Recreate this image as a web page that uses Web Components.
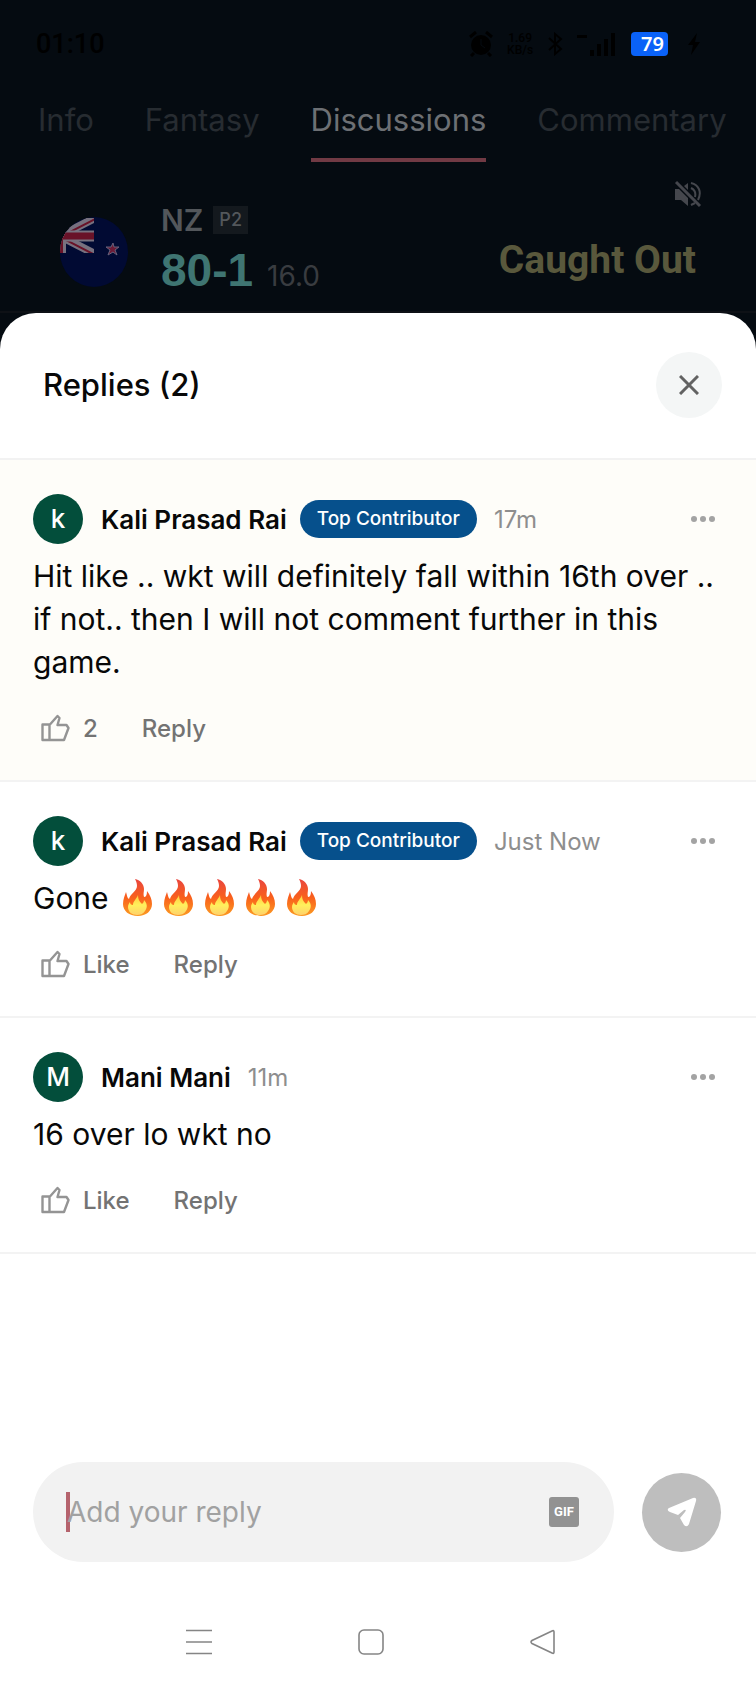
<!DOCTYPE html>
<html lang="en">
<head>
<meta charset="utf-8">
<meta name="viewport" content="width=device-width, initial-scale=1">
<title>Replies</title>
<style>
    html {
        background: #050b11;
    }
    body {
        margin: 0;
        font-family: Inter, "Liberation Sans", sans-serif;
        color: #080808;
    }
</style>
</head>
<body>
<discussion-app>
    <status-bar slot="top"></status-bar>
    <match-tabs slot="top"></match-tabs>
    <match-score slot="top" team="NZ" phase="P2" score="80-1" overs="16.0">Caught Out</match-score>
    <replies-header count="2">Replies</replies-header>
    <reply-comment author="Kali Prasad Rai" initial="k" time="17m" likes="2" top highlighted>Hit like .. wkt will definitely fall within 16th over .. if not.. then I will not comment further in this game.</reply-comment>
    <reply-comment author="Kali Prasad Rai" initial="k" time="Just Now" top>Gone <fire-emoji></fire-emoji><fire-emoji></fire-emoji><fire-emoji></fire-emoji><fire-emoji></fire-emoji><fire-emoji></fire-emoji></reply-comment>
    <reply-comment author="Mani Mani" initial="M" time="11m">16 over lo wkt no</reply-comment>
    <reply-composer slot="bottom"></reply-composer>
    <system-nav slot="bottom"></system-nav>
</discussion-app>

<script>
class DiscussionApp extends HTMLElement {
    constructor() {
        super();
        this.attachShadow({ mode: "open" });
        this.shadowRoot.innerHTML = `
        <style>
            :host {
                display: flex;
                flex-direction: column;
                min-height: 100vh;
                background: #050b11;
            }
            main {
                flex: 1;
                display: flex;
                flex-direction: column;
                background: #fff;
                border-radius: 36px 36px 0 0;
            }
            .list {
                flex: 1;
            }
        </style>
        <header><slot name="top"></slot></header>
        <main>
            <div class="list"><slot></slot></div>
            <slot name="bottom"></slot>
        </main>`;
    }
}

class StatusBar extends HTMLElement {
    constructor() {
        super();
        this.attachShadow({ mode: "open" });
        this.shadowRoot.innerHTML = `
        <style>
            :host {
                display: flex;
                align-items: center;
                justify-content: space-between;
                height: 88px;
                padding: 0 50px 0 36px;
                box-sizing: border-box;
                color: #000;
                font: 500 27px Roboto, sans-serif;
            }
            .icons {
                display: flex;
                align-items: center;
                gap: 14px;
            }
            .speed {
                font-size: 12px;
                line-height: 12px;
                text-align: center;
            }
            .battery {
                padding: 0 4px 0 10px;
                border-radius: 4px;
                background: #0a62f8;
                color: #fff;
                font: 600 20px/24px "Noto Sans", sans-serif;
            }
            svg {
                display: block;
            }
        </style>
        <span>01:10</span>
        <div class="icons">
            <svg width="24" height="26" viewBox="0 0 24 26">
                <circle cx="12" cy="14" r="10"/>
                <path d="M1 6l6-5M23 6l-6-5M5 22l-3 3M19 22l3 3" stroke="#000" stroke-width="3"/>
                <path d="M12 8v6l4 3" fill="none" stroke="#050b11" stroke-width="1"/>
            </svg>
            <span class="speed">1.69<br>KB/s</span>
            <svg width="16" height="24" viewBox="0 0 16 24" fill="none" stroke="#000" stroke-width="2">
                <path d="M2 6l12 11-6 5V2l6 5L2 18"/>
            </svg>
            <svg width="40" height="24" viewBox="0 0 40 24">
                <path d="M0 3h10v3H0zM13 18h4v6h-4zM20 12h4v12h-4zM27 7h4v17h-4zM34 1h4v23h-4z"/>
            </svg>
            <span class="battery">79</span>
            <svg width="24" height="24" viewBox="0 0 24 24">
                <path d="M15 1L6 13h5l-2 10 9-13h-5z"/>
            </svg>
        </div>`;
    }
}

class MatchTabs extends HTMLElement {
    constructor() {
        super();
        this.attachShadow({ mode: "open" });
        this.shadowRoot.innerHTML = `
        <style>
            :host {
                display: block;
                overflow: hidden;
            }
            nav {
                display: flex;
                gap: 51px;
                padding: 0 38px;
            }
            a {
                padding: 11px 0 17px;
                border-bottom: 4px solid transparent;
                color: #272c31;
                font-size: 31px;
                line-height: 42px;
                text-decoration: none;
            }
            a[aria-current] {
                color: #6d7074;
                border-color: #713a44;
            }
        </style>
        <nav>
            <a href="#info">Info</a>
            <a href="#fantasy">Fantasy</a>
            <a href="#discussions" aria-current="page">Discussions</a>
            <a href="#commentary">Commentary</a>
        </nav>`;
    }
}

class MatchScore extends HTMLElement {
    constructor() {
        super();
        this.attachShadow({ mode: "open" });
        this.shadowRoot.innerHTML = `
        <style>
            :host {
                display: flex;
                height: 151px;
                padding: 18px 54px 0 60px;
                box-sizing: border-box;
                border-bottom: 2px solid #0e1116;
            }
            .flag {
                align-self: flex-start;
                margin: 36px 33px 0 0;
            }
            .team {
                flex: 1;
                padding-top: 21px;
            }
            .row {
                display: flex;
                align-items: center;
                gap: 10px;
                height: 38px;
                color: #53575b;
                font-size: 30px;
                font-weight: 600;
            }
            .phase {
                padding: 0 6px;
                background: #14191e;
                font-size: 18px;
                line-height: 28px;
                font-weight: 500;
            }
            .total {
                display: flex;
                align-items: baseline;
                gap: 14px;
                line-height: 62px;
            }
            .score {
                color: #3f7572;
                font-family: "Liberation Sans", sans-serif;
                font-size: 46px;
                font-weight: 700;
            }
            .overs {
                color: #393c40;
                font-size: 28px;
            }
            .side {
                display: flex;
                flex-direction: column;
                align-items: flex-end;
                gap: 28px;
            }
            button {
                padding: 0;
                border: 0;
                background: none;
            }
            svg {
                display: block;
            }
            .event {
                padding-right: 6px;
                color: #59583c;
                font: 700 39px/48px Roboto, sans-serif;
            }
        </style>
        <svg class="flag" width="68" height="72" viewBox="0 0 68 72" role="img" aria-label="New Zealand">
            <clipPath id="disc"><ellipse cx="34" cy="36" rx="34" ry="35"/></clipPath>
            <clipPath id="canton"><path d="M0 2h34v35H0z"/></clipPath>
            <g clip-path="url(#disc)">
                <rect width="68" height="72" fill="#010a33"/>
                <g clip-path="url(#canton)">
                    <path d="M0 20L37 1M0 20l37 19" stroke="#77717f" stroke-width="8"/>
                    <path d="M0 21L37 2M0 21l37 19" stroke="#691228" stroke-width="2"/>
                    <path d="M0 20h34" stroke="#77717f" stroke-width="11"/>
                    <path d="M0 0v40" stroke="#77717f" stroke-width="12"/>
                    <path d="M0 20h34" stroke="#691228" stroke-width="7"/>
                    <path d="M0 0v40" stroke="#691228" stroke-width="6"/>
                </g>
                <path d="M53 27l1 4h5l-4 3 2 5-4-3-5 3 2-5-4-3h5z" fill="#6d1a36" stroke="#66627c"/>
            </g>
        </svg>
        <div class="team">
            <div class="row"><span>${this.getAttribute("team")}</span><span class="phase">${this.getAttribute("phase")}</span></div>
            <div class="total"><span class="score">${this.getAttribute("score")}</span><span class="overs">${this.getAttribute("overs")}</span></div>
        </div>
        <div class="side">
            <button type="button" aria-label="Unmute">
                <svg width="28" height="28" viewBox="0 0 28 28" fill="none" stroke="#45474d" stroke-width="3">
                    <path d="M1 9h4l9 9v8l-7-6H1z" fill="#45474d" stroke="none"/>
                    <path d="M10 6l4-3v7z" fill="#45474d" stroke="none"/>
                    <path d="M2 2l24 24"/>
                    <path d="M17 3c8 2 11 9 7 17M17 8c4 2 5 5 4 9M17 25l4-2" stroke-width="2"/>
                </svg>
            </button>
            <div class="event"><slot></slot></div>
        </div>`;
    }
}

class RepliesHeader extends HTMLElement {
    constructor() {
        super();
        this.attachShadow({ mode: "open" });
        this.shadowRoot.innerHTML = `
        <style>
            :host {
                display: flex;
                align-items: center;
                justify-content: space-between;
                padding: 39px 34px 40px 43px;
                border-bottom: 2px solid #f2f2f2;
            }
            h1 {
                margin: 0;
                font-size: 31px;
                line-height: 40px;
                font-weight: 500;
            }
            button {
                display: grid;
                place-items: center;
                width: 66px;
                height: 66px;
                padding: 0;
                border: 0;
                border-radius: 50%;
                background: #f4f6f6;
            }
        </style>
        <h1><slot></slot> (${this.getAttribute("count")})</h1>
        <button type="button" aria-label="Close">
            <svg width="20" height="20" viewBox="0 0 20 20" stroke="#626262" stroke-width="3">
                <path d="M1 1l18 18M19 1L1 19"/>
            </svg>
        </button>`;
    }
}

class FireEmoji extends HTMLElement {
    constructor() {
        super();
        this.attachShadow({ mode: "open" });
        this.shadowRoot.innerHTML = `
        <style>
            :host {
                display: inline-block;
                margin: 0 6px;
                vertical-align: -7px;
            }
            svg {
                display: block;
            }
        </style>
        <svg width="29" height="37" viewBox="0 0 29 37" role="img" aria-label="fire">
            <defs>
                <linearGradient id="outer" x1="0" y1="0" x2="0" y2="1">
                    <stop offset="0" stop-color="#e9463f"/>
                    <stop offset=".5" stop-color="#f9601c"/>
                    <stop offset="1" stop-color="#fb9b22"/>
                </linearGradient>
                <linearGradient id="inner" x1="0" y1="0" x2="0" y2="1">
                    <stop offset="0" stop-color="#ffc93c"/>
                    <stop offset=".5" stop-color="#fff05c"/>
                    <stop offset="1" stop-color="#ffd16b"/>
                </linearGradient>
            </defs>
            <path fill="url(#outer)" d="M12 0c5 1 9 5 9 10 0 3-1 5 0 8 2 0 3-2 3-6 3 4 5 8 5 13 0 7-6 12-14 12C6 37 0 32 0 25c0-5 2-9 3-12 1 3 1 6 3 7 1-5 8-8 8-13 0-3-1-5-2-7z"/>
            <path fill="url(#inner)" d="M15 16c0 4 1 6 4 9 1-1 2-2 2-4 3 3 4 7 1 11-2 3-5 4-8 4-5 0-9-3-9-8 0-2 1-4 2-5 0 2 1 3 3 3 0-4 3-5 5-10z"/>
        </svg>`;
    }
}

class ReplyComment extends HTMLElement {
    constructor() {
        super();
        this.attachShadow({ mode: "open" });
        this.shadowRoot.innerHTML = `
        <style>
            :host {
                display: block;
                padding: 34px 35px 27px 33px;
                border-bottom: 2px solid #f3f3f3;
            }
            :host([highlighted]) {
                background: #fefdf9;
            }
            .head {
                display: flex;
                align-items: center;
            }
            .avatar {
                width: 50px;
                margin-right: 18px;
                border-radius: 50%;
                background: #034e3b;
                color: #fff;
                font-size: 26px;
                line-height: 50px;
                font-weight: 500;
                text-align: center;
            }
            .author {
                font-size: 26px;
                font-weight: 600;
            }
            .badge {
                margin-left: 13px;
                padding: 0 17px;
                border-radius: 19px;
                background: #06508c;
                color: #fff;
                font-size: 19px;
                line-height: 38px;
                font-weight: 500;
            }
            .time {
                margin-left: 17px;
                color: #8e8e8e;
                font-size: 24px;
            }
            .more {
                margin-left: auto;
                padding: 8px 5px;
            }
            button {
                display: flex;
                align-items: center;
                padding: 0;
                border: 0;
                background: none;
                color: #737373;
                font: 500 24px Inter, sans-serif;
            }
            p {
                margin: 11px 0 19px;
                font-size: 30px;
                line-height: 43px;
            }
            .actions {
                display: flex;
                gap: 44px;
                height: 50px;
                padding-left: 8px;
            }
            .like {
                gap: 13px;
            }
        </style>
        <div class="head">
            <span class="avatar">${this.getAttribute("initial")}</span>
            <span class="author">${this.getAttribute("author")}</span>
            ${this.hasAttribute("top") ? `<span class="badge">Top Contributor</span>` : ""}
            <span class="time">${this.getAttribute("time")}</span>
            <button class="more" type="button" aria-label="More options">
                <svg width="26" height="8" viewBox="0 0 26 8" fill="#a3a3a3">
                    <circle cx="4" cy="4" r="3"/><circle cx="13" cy="4" r="3"/><circle cx="22" cy="4" r="3"/>
                </svg>
            </button>
        </div>
        <p><slot></slot></p>
        <div class="actions">
            <button class="like" type="button">
                <svg width="29" height="28" viewBox="0 0 29 28" fill="none" stroke="#949494" stroke-width="2.4" stroke-linejoin="round">
                    <path d="M1.5 10.500h7v15.500h-7zM8.500 11L16.500 2l2 2-2 7h9l2 3-4.500 12H8.500"/>
                </svg>
                <span>${this.getAttribute("likes") || "Like"}</span>
            </button>
            <button type="button">Reply</button>
        </div>`;
    }
}

class ReplyComposer extends HTMLElement {
    constructor() {
        super();
        this.attachShadow({ mode: "open" });
        this.shadowRoot.innerHTML = `
        <style>
            :host {
                display: block;
                padding: 0 35px 0 33px;
            }
            form {
                display: flex;
                align-items: center;
                gap: 28px;
            }
            .field {
                position: relative;
                flex: 1;
                display: flex;
                align-items: center;
                height: 100px;
                padding: 0 35px 0 34px;
                box-sizing: border-box;
                border-radius: 50px;
                background: #f2f2f2;
            }
            .caret {
                position: absolute;
                left: 33px;
                top: 30px;
                width: 4px;
                height: 40px;
                background: #b5636d;
            }
            input {
                position: relative;
                flex: 1;
                min-width: 0;
                padding: 0;
                border: 0;
                outline: 0;
                background: none;
                font: 400 28px/40px Inter, sans-serif;
            }
            input::placeholder {
                color: #a1a1a1;
                opacity: 1;
            }
            button {
                padding: 0;
                border: 0;
            }
            .gif {
                width: 30px;
                height: 30px;
                border-radius: 3px;
                background: #929292;
                color: #fff;
                font: 700 13px/30px Roboto, sans-serif;
            }
            .send {
                display: grid;
                place-items: center;
                width: 79px;
                height: 79px;
                border-radius: 50%;
                background: #bebebe;
            }
        </style>
        <form>
            <div class="field">
                <span class="caret"></span>
                <input type="text" aria-label="Add your reply" placeholder="Add your reply">
                <button class="gif" type="button">GIF</button>
            </div>
            <button class="send" type="button" aria-label="Send">
                <svg width="30" height="30" viewBox="0 0 30 30">
                    <path fill="#fff" d="M26 1q4-1 3 3l-7 23q-2 4-5 1l-4-7 5-6q2-3-1-2l-6 5-8-3q-4-2-1-4z"/>
                </svg>
            </button>
        </form>`;
    }
}

class SystemNav extends HTMLElement {
    constructor() {
        super();
        this.attachShadow({ mode: "open" });
        this.shadowRoot.innerHTML = `
        <style>
            :host {
                display: block;
                padding: 64px 0 30px;
            }
            nav {
                display: flex;
                justify-content: center;
                gap: 140px;
                padding-right: 14px;
            }
            button {
                padding: 0;
                border: 0;
                background: none;
            }
            svg {
                display: block;
                fill: none;
                stroke: #858585;
                stroke-width: 1.6;
            }
        </style>
        <nav>
            <button type="button" aria-label="Recent apps">
                <svg width="32" height="32" viewBox="0 0 32 32"><path d="M3 4.500h26M3 16h26M3 27.500h26"/></svg>
            </button>
            <button type="button" aria-label="Home">
                <svg width="32" height="32" viewBox="0 0 32 32"><rect x="4" y="4" width="24" height="24" rx="5"/></svg>
            </button>
            <button type="button" aria-label="Back">
                <svg width="32" height="32" viewBox="0 0 32 32"><path d="M25 5q2-1 2 1v20q0 2-2 1L5 17.500q-2-1.500 0-3z"/></svg>
            </button>
        </nav>`;
    }
}

customElements.define("discussion-app", DiscussionApp);
customElements.define("status-bar", StatusBar);
customElements.define("match-tabs", MatchTabs);
customElements.define("match-score", MatchScore);
customElements.define("replies-header", RepliesHeader);
customElements.define("fire-emoji", FireEmoji);
customElements.define("reply-comment", ReplyComment);
customElements.define("reply-composer", ReplyComposer);
customElements.define("system-nav", SystemNav);
</script>
</body>
</html>
